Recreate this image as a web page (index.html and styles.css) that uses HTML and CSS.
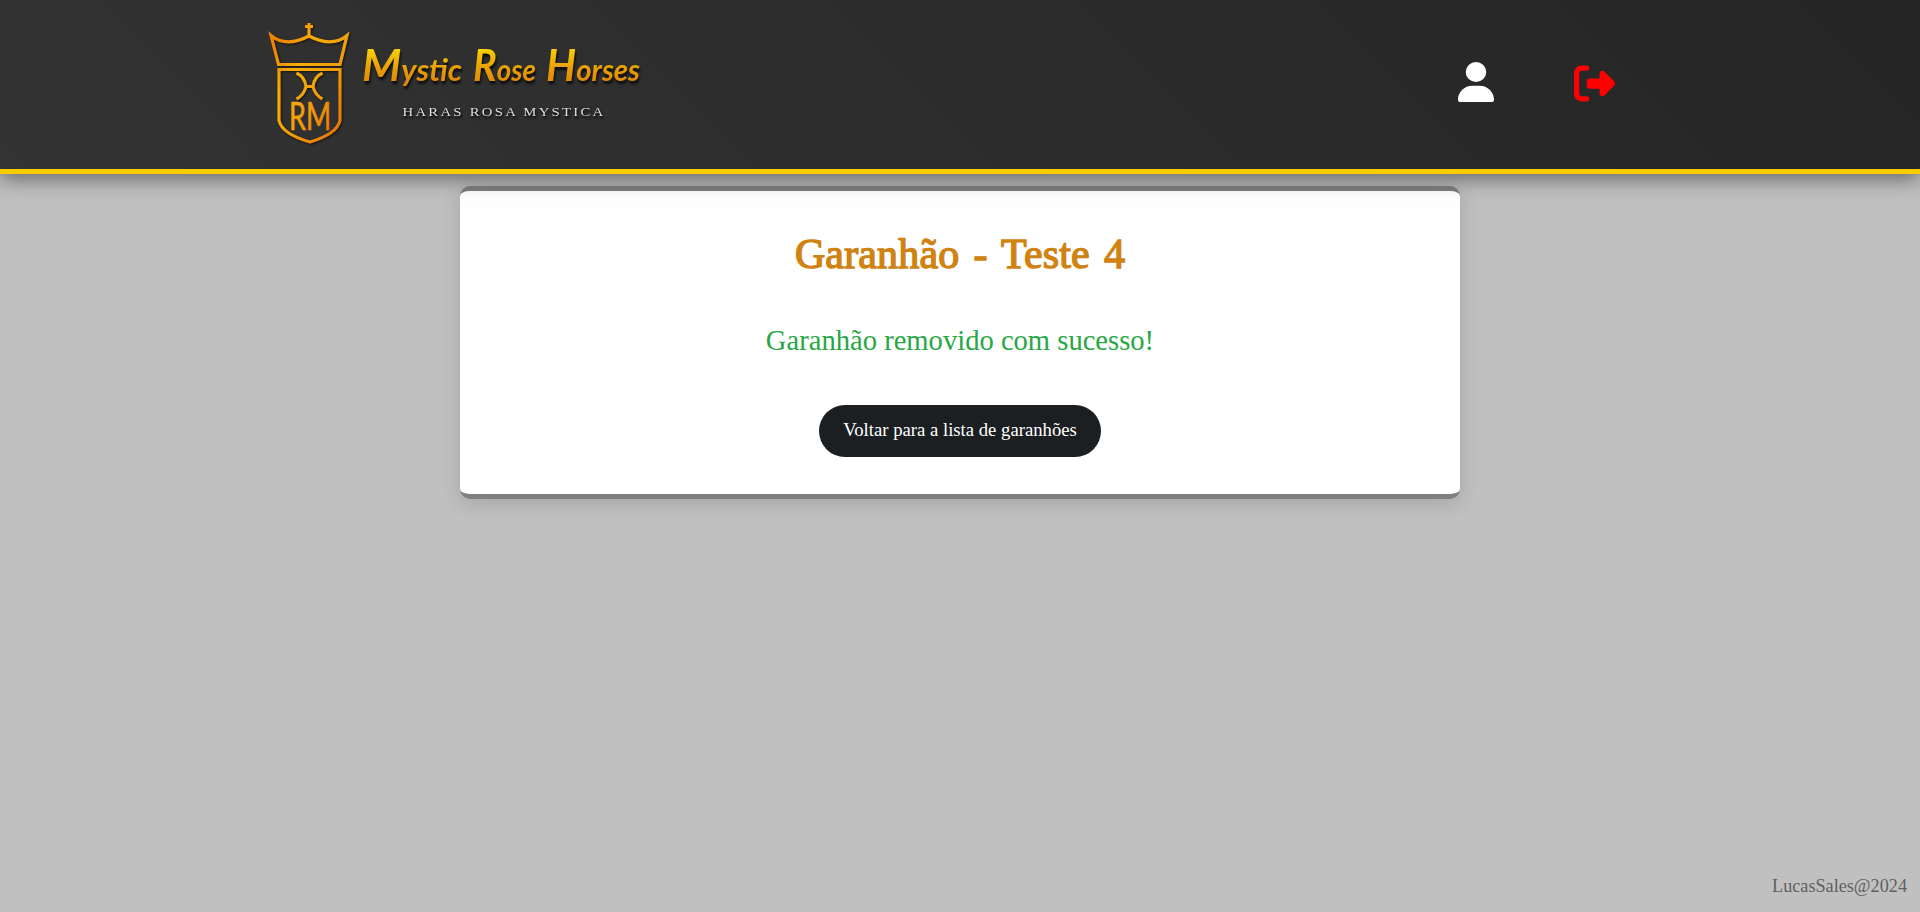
FILE: index.html
```html
<!DOCTYPE html>
<html lang="pt-BR">
<head>
<meta charset="utf-8">
<title>Mystic Rose Horses</title>
<link rel="stylesheet" href="styles.css">
</head>
<body>
<header class="header">
  <a class="brand" aria-label="Mystic Rose Horses">
    <svg class="logo" viewBox="260 15 390 135">
      <defs>
        <linearGradient id="gold" gradientUnits="userSpaceOnUse" x1="269" y1="60" x2="349" y2="110">
          <stop offset="0" stop-color="#ef8500"/><stop offset=".28" stop-color="#f6ae08"/><stop offset=".65" stop-color="#ef9d0a"/><stop offset="1" stop-color="#e87906"/>
        </linearGradient>
        <linearGradient id="script" gradientUnits="userSpaceOnUse" x1="0" y1="48" x2="0" y2="91">
          <stop offset="0" stop-color="#f8d400"/><stop offset=".45" stop-color="#e9a007"/><stop offset="1" stop-color="#dc7908"/>
        </linearGradient>
      </defs>
      <g class="crest">
        <path d="M309 23v12M305 26.500h8"/>
        <path d="M271 35.500Q286 48 309 36Q332 48 347 35.500L340 64.500H278.500Z"/>
        <path d="M279 69.500H340V120.500Q337 134 310 142Q282 134 279 120.500Z"/>
        <path d="M296.500 73Q305 77 306 86.500Q304 95 296.500 99M322.500 73Q314 77 313 86.500Q315 95 322.500 99M306 86.500H313"/>
      </g>
      <text class="mono" x="289" y="129.500" textLength="42" lengthAdjust="spacingAndGlyphs">RM</text>
      <g class="script">
        <text x="362" y="81" textLength="100" lengthAdjust="spacingAndGlyphs"><tspan class="cap">M</tspan>ystic</text>
        <text x="473" y="81" textLength="63" lengthAdjust="spacingAndGlyphs"><tspan class="cap">R</tspan>ose</text>
        <text x="546" y="81" textLength="94" lengthAdjust="spacingAndGlyphs"><tspan class="cap">H</tspan>orses</text>
      </g>
      <text class="sub" x="402.500" y="116.300" textLength="203" lengthAdjust="spacingAndGlyphs">HARAS ROSA MYSTICA</text>
    </svg>
  </a>
  <nav class="actions">
    <svg class="user" viewBox="0 0 448 512" preserveAspectRatio="none"><path d="M224 256A128 128 0 1 0 224 0a128 128 0 1 0 0 256zm-45.700 48C79.800 304 0 383.800 0 482.300C0 498.700 13.300 512 29.700 512H418.300c16.400 0 29.700-13.300 29.700-29.700C448 383.800 368.200 304 269.700 304H178.300z"/></svg>
    <svg class="logout" viewBox="0 0 512 512"><path d="M377.900 105.900L500.700 228.700c7.200 7.200 11.300 17.100 11.300 27.300s-4.100 20.100-11.300 27.300L377.900 406.100c-6.400 6.400-15 9.900-24 9.900c-18.700 0-33.900-15.200-33.900-33.900l0-62.100-128 0c-17.700 0-32-14.300-32-32l0-64c0-17.700 14.300-32 32-32l128 0 0-62.100c0-18.700 15.200-33.900 33.900-33.900c9 0 17.600 3.600 24 9.900zM160 96L96 96c-17.700 0-32 14.300-32 32l0 256c0 17.700 14.300 32 32 32l64 0c17.700 0 32 14.300 32 32s-14.300 32-32 32l-64 0c-53 0-96-43-96-96L0 128C0 75 43 32 96 32l64 0c17.700 0 32 14.300 32 32s-14.300 32-32 32z"/></svg>
  </nav>
</header>
<main class="card">
  <h1 class="title">Garanhão - Teste 4</h1>
  <p class="message">Garanhão removido com sucesso!</p>
  <a class="button">Voltar para a lista de garanhões</a>
</main>
<footer class="footer">LucasSales@2024</footer>
</body>
</html>
```
FILE: styles.css
```css
* { box-sizing: border-box; }
body {
  margin: 0;
  height: 912px;
  display: flex;
  flex-direction: column;
  background: #c0c0c0;
  font-family: "Liberation Serif", serif;
  overflow: hidden;
}
.header {
  height: 174px;
  flex: none;
  display: flex;
  justify-content: space-between;
  padding: 15px 305px 0 260px;
  background: linear-gradient(45deg, #333, #252525);
  border-bottom: 5px solid #fc0;
  box-shadow: 0 4px 20px rgba(0, 0, 0, .5);
  z-index: 1;
}
.logo { display: block; width: 390px; height: 135px; }
.crest {
  fill: none;
  stroke: url(#gold);
  stroke-width: 3.2;
  filter: drop-shadow(1px 1px 1px rgba(0, 0, 0, .6));
}
.mono {
  font: 38px Lato, sans-serif;
  fill: url(#gold);
  stroke: url(#gold);
  stroke-width: .6;
}
.script {
  font: italic 700 30px Lato, sans-serif;
  fill: url(#script);
  filter: drop-shadow(1px 3px 1px rgba(0, 0, 0, .75));
}
.cap { font-size: 43px; }
.sub {
  font: 13px "Liberation Serif", serif;
  letter-spacing: 2px;
  fill: #ddd;
  filter: drop-shadow(1px 2px 1px #000);
}
.actions { display: flex; gap: 80px; padding-top: 47px; }
.user { width: 36px; height: 40px; fill: #fff; }
.logout { width: 41px; height: 41px; margin-top: .5px; fill: red; }
.card {
  width: 1000px;
  height: 313px;
  flex: none;
  margin: 12px auto 0;
  display: flex;
  flex-direction: column;
  align-items: center;
  background: #fff;
  border-top: 5px solid #808080;
  border-bottom: 5px solid #808080;
  border-radius: 10px;
  box-shadow: 0 4px 20px rgba(0, 0, 0, .15);
}
.title {
  margin: 38px 0 0;
  font-size: 42px;
  font-weight: 400;
  line-height: 50px;
  letter-spacing: .15px;
  word-spacing: 3.500px;
  color: #d08312;
  -webkit-text-stroke: 1.400px #d08312;
  white-space: nowrap;
}
.message {
  margin: 44px 0 0;
  font-size: 28.600px;
  line-height: 36px;
  color: #28a745;
}
.button {
  margin-top: 46px;
  width: 282px;
  height: 52px;
  border-radius: 26px;
  background: #1b1f22;
  color: #fff;
  font-size: 18.700px;
  line-height: 50px;
  text-align: center;
}
.footer {
  margin: auto 13px 14px auto;
  font-size: 18.200px;
  line-height: 24px;
  color: #606060;
}
```
